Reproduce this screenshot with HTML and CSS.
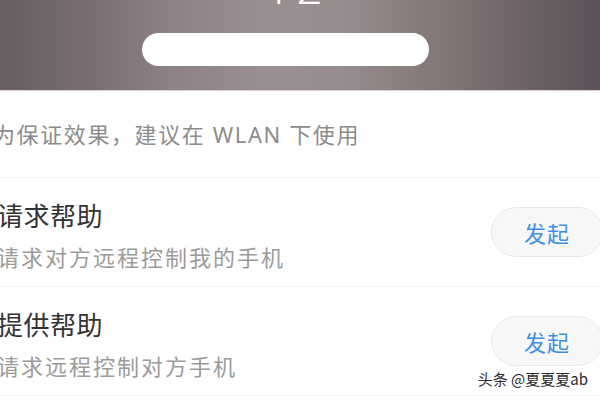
FILE: index.html
```html
<!DOCTYPE html>
<html lang="zh-CN">
<head>
    <meta charset="UTF-8">
    <meta name="viewport" content="width=device-width, initial-scale=1.0">
    <title>远程协助</title>
    <link rel="stylesheet" href="styles.css">
</head>
<body>

    <div class="header">
        <div class="clock">12</div>
        <div class="search-pill"></div>
    </div>

    <div class="content">
        <div class="notice">为保证效果，建议在 WLAN 下使用</div>

        <div class="row">
            <div class="row-text">
                <div class="row-title">请求帮助</div>
                <div class="row-desc">请求对方远程控制我的手机</div>
            </div>
            <button class="start-btn">发起</button>
        </div>

        <div class="row">
            <div class="row-text">
                <div class="row-title">提供帮助</div>
                <div class="row-desc">请求远程控制对方手机</div>
            </div>
            <button class="start-btn">发起</button>
        </div>
    </div>

    <div class="watermark">头条 @夏夏夏ab</div>

</body>
</html>
```

FILE: styles.css
```css
body {
    margin: 0;
    width: 600px;
    height: 400px;
    overflow: hidden;
    position: relative;
    background-color: #fff;
    font-family: "Noto Sans CJK SC", "Noto Sans", sans-serif;
}
.header {
    height: 91px;
    box-sizing: border-box;
    padding-right: 30px;
    display: flex;
    flex-direction: column;
    align-items: center;
    overflow: hidden;
    background: linear-gradient(90deg, #675d62 0%, #7a6e70 15%, #8f8385 30%, #9a8f91 45%, #968b8d 58%, #857879 72%, #726669 85%, #5a5158 100%);
    border-bottom: 1px solid #d6d2d2;
}
.clock {
    margin-top: -33px;
    margin-left: 22px;
    height: 42px;
    line-height: 42px;
    font-family: Roboto, "Noto Sans", sans-serif;
    font-weight: 300;
    font-size: 46px;
    color: #fff;
    letter-spacing: 6px;
}
.search-pill {
    margin-top: 24px;
    width: 287px;
    height: 33px;
    border-radius: 17px;
    background-color: #fff;
}
.content {
    overflow: hidden;
}
.notice {
    height: 86px;
    line-height: 86px;
    margin-left: -7px;
    font-family: "Noto Sans", "Noto Sans CJK SC", sans-serif;
    font-size: 22px;
    letter-spacing: 1.6px;
    color: #8c8c8c;
    border-bottom: 1px solid #f0f0f0;
}
.row {
    height: 108px;
    display: flex;
    align-items: center;
    justify-content: space-between;
    margin-left: -3px;
    margin-right: -3px;
    border-bottom: 1px solid #f0f0f0;
}
.row-text {
    display: flex;
    flex-direction: column;
    gap: 9px;
    padding-top: 4px;
}
.row-title {
    font-size: 26px;
    line-height: 34px;
    letter-spacing: 0.5px;
    color: #333;
}
.row-desc {
    font-size: 22px;
    line-height: 30px;
    letter-spacing: 2px;
    color: #9b9b9b;
}
.start-btn {
    width: 112px;
    height: 50px;
    border-radius: 25px;
    border: 1px solid #e8e8e8;
    background-color: #f7f7f7;
    color: #3f8fe6;
    font-family: "Noto Sans CJK SC", sans-serif;
    font-size: 22px;
    letter-spacing: 1px;
    padding: 0;
    cursor: pointer;
}
.watermark {
    position: absolute;
    right: 12px;
    bottom: 11px;
    font-size: 15px;
    color: #2a2a2a;
    text-shadow: 0 0 2px #fff, 0 0 2px #fff;
}
```
